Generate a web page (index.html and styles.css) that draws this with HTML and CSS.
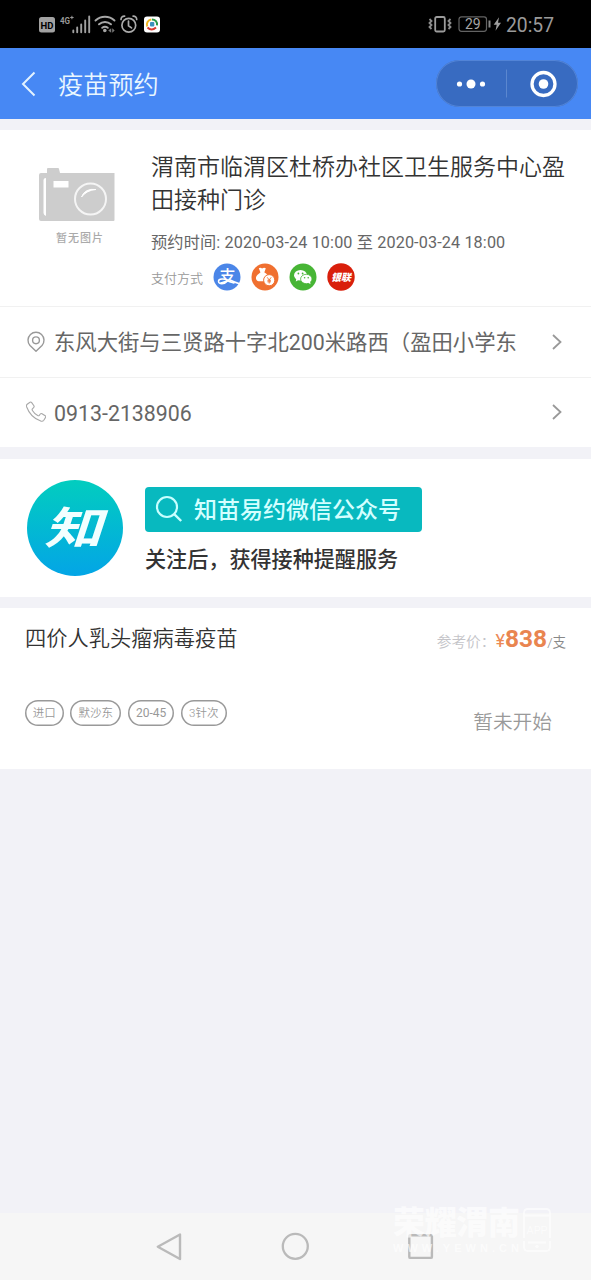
FILE: index.html
```html
<!DOCTYPE html>
<html lang="zh-CN">
<head>
<meta charset="utf-8">
<title>疫苗预约</title>
<link rel="stylesheet" href="styles.css">
</head>
<body>
<div class="status">
  <svg class="status-left" width="126" height="24" viewBox="0 0 126 24">
    <rect x="1" y="5" width="16" height="15.500" rx="2.500" fill="#a2a2a2"/>
    <text x="9" y="16.500" class="hd" text-anchor="middle">HD</text>
    <text x="22" y="11.500" class="net" textLength="10" lengthAdjust="spacingAndGlyphs">4G</text>
    <path d="M32.200 5.500h3.400M33.900 3.800v3.400" stroke="#999" stroke-width="1"/>
    <path d="M35.300 18.500v1.800M39.200 15.500v4.800M43.200 12.500v7.800M47.200 8.500v11.800M51.200 4.500v15.800" stroke="#a0a0a0" stroke-width="1.900" stroke-linecap="round"/>
    <g fill="none" stroke="#a6a6a6" stroke-width="1.900" stroke-linecap="round">
      <path d="M57.500 8.500c5.400-5 13.600-5 19 0M61 12.300c3.500-3.100 8.500-3.100 12 0M64.200 15.800c1.700-1.400 3.900-1.400 5.600 0"/>
    </g>
    <circle cx="66.800" cy="18.500" r="1.800" fill="#a6a6a6"/>
    <path d="M73.200 16.200v4.600l-3-2.300zM74.200 16.200v4.600l2.500-2.300z" fill="#777"/>
    <g fill="none" stroke="#aaa" stroke-width="1.700" stroke-linecap="round">
      <circle cx="90.800" cy="13.200" r="6.900"/><path d="M90.500 9v4.700l3 2.200M83 7.500c0-2 1.700-3.600 3.600-3.400M98.700 7.500c0-2-1.700-3.600-3.600-3.400"/>
    </g>
    <rect x="106" y="4.500" width="16" height="16" rx="3" fill="#fff"/>
    <path d="M109.300 14.500a5 5 0 0 1 4-7" fill="none" stroke="#f2b51e" stroke-width="2"/>
    <path d="M114 7.400a5 5 0 0 1 5 6" fill="none" stroke="#2b9b4b" stroke-width="2"/>
    <path d="M109.500 15.500q4 4 8.500 0" fill="none" stroke="#d93a30" stroke-width="2"/>
    <rect x="112" y="10" width="4.300" height="4.500" rx="1" fill="#3c92bd"/>
  </svg>
  <div class="status-right">
    <svg width="74" height="20" viewBox="0 0 74 20">
      <rect x="7.200" y="3" width="9.600" height="14.500" rx="1.500" fill="none" stroke="#9b9b9b" stroke-width="1.800"/>
      <path d="M1.500 5l2 2-2 2 2 2-2 2 2 2M22.500 5l-2 2 2 2-2 2 2 2-2 2" fill="none" stroke="#8d8d8d" stroke-width="1.800"/>
      <rect x="31" y="2.800" width="27.500" height="14.500" rx="2.500" fill="none" stroke="#636363" stroke-width="1.200"/>
      <path d="M61.500 6.500v7" stroke="#888" stroke-width="2"/>
      <path d="M71 3.300l-5.300 7.500h3l-1.200 6 5.500-8h-3z" fill="#a0a0a0"/>
      <text x="44.800" y="15" class="battery" text-anchor="middle">29</text>
    </svg>
    <span class="clock">20:57</span>
  </div>
</div>

<header class="header">
  <svg class="back" width="16" height="26" viewBox="0 0 16 26"><path d="M13.500 1.500L2 13l11.500 11.500" fill="none" stroke="#e3f3ff" stroke-width="2"/></svg>
  <h1 class="page-title">疫苗预约</h1>
  <div class="capsule">
    <svg width="142" height="47" viewBox="0 0 142 47">
      <g fill="#fff"><circle cx="23.500" cy="24" r="2.600"/><circle cx="35" cy="24" r="4.500"/><circle cx="46.500" cy="24" r="2.600"/><circle cx="107.500" cy="24" r="4.800"/></g>
      <path d="M70.500 9.500v28" stroke="#5b87cf" stroke-width="1"/>
      <circle cx="107.500" cy="24" r="11.500" fill="none" stroke="#fff" stroke-width="3.300"/>
    </svg>
  </div>
</header>

<main>
  <section class="card clinic">
    <div class="clinic-top">
      <div class="photo">
        <svg width="78" height="56" viewBox="0 0 78 56">
          <path d="M1 8q0-2 2-2h6V2q0-1 1-1h10q1 0 1 1l1 4h54.500v47q0 1-1 1H3q-2 0-2-2z" fill="#cdcdcd"/>
          <path d="M5.500 13q0-2 2.500-2v38q-2.500-1-2.500-3zM15.500 14h15v6.500h-15z" fill="#fff"/>
          <circle cx="52.500" cy="32" r="15.500" fill="none" stroke="#f5f5f5" stroke-width="2"/>
          <path d="M43.500 30q3.500-9 14.500-7.500-9 .5-14.500 7.500z" fill="#fff" stroke="#fff" stroke-linejoin="round"/>
        </svg>
        <span class="photo-note">暂无图片</span>
      </div>
      <div class="clinic-info">
        <h2 class="clinic-name">渭南市临渭区杜桥办社区卫生服务中心盈田接种门诊</h2>
        <div class="time">预约时间: 2020-03-24 10:00 至 2020-03-24 18:00</div>
        <div class="pay">
          <span class="pay-label">支付方式</span>
          <svg width="28" height="28" viewBox="0 0 28 28"><circle cx="14" cy="14" r="13.500" fill="#4b86e8"/><text x="14.500" y="18.500" class="alipay" text-anchor="middle">支</text><path d="M16 16.500q5 2.500 10.500 4.300M14.500 18c-3 3.500-9 3.500-9 .3 0-3 6-2.700 9.500-1" fill="none" stroke="#fff" stroke-width="1.500"/></svg>
          <svg width="28" height="28" viewBox="0 0 28 28"><circle cx="14" cy="14" r="13.500" fill="#f07030"/><path d="M7.800 5.200q1.700-.8 3.300.2 1.800-1 3.700-.2l-1.500 4.300H9.500zM9.300 9.500h4.200c3.500 1.800 4.500 5 4.300 8.800H7.500q-3-.8-2.500-4c.5-2 2.300-3.200 4.300-4.800z" fill="#fff"/><circle cx="18.200" cy="17.200" r="5.600" fill="#fff" stroke="#f07030" stroke-width="1"/><path d="M16.200 14.300l2 2.700 2-2.700M18.200 17v3.500M16.400 17.300h3.600M16.400 18.800h3.600" fill="none" stroke="#f07030" stroke-width=".9"/></svg>
          <svg width="28" height="28" viewBox="0 0 28 28"><circle cx="14" cy="14" r="13.500" fill="#47b535"/><ellipse cx="11.500" cy="12.200" rx="6.500" ry="5.300" fill="#fff"/><path d="M7.500 15l-.7 3.500 3.500-2z" fill="#fff"/><ellipse cx="17.300" cy="16" rx="5.700" ry="4.700" fill="#fff" stroke="#47b535" stroke-width=".8"/><path d="M19 19.500l2.500 1.800-.5-3z" fill="#fff"/><g fill="#47b535"><circle cx="9.400" cy="10.500" r=".9"/><circle cx="13.600" cy="10.500" r=".9"/><circle cx="15.600" cy="14.700" r=".8"/><circle cx="19.200" cy="14.700" r=".8"/></g></svg>
          <svg width="28" height="28" viewBox="0 0 28 28"><circle cx="14" cy="14" r="13.700" fill="#d91f0b"/><text x="14" y="17.700" class="union" text-anchor="middle" textLength="20">银联</text></svg>
        </div>
      </div>
    </div>
    <div class="row">
      <svg width="20" height="22" viewBox="0 0 20 22"><path d="M10 20.300L4 14.500a8 8 0 1 1 12 0z" fill="none" stroke="#999" stroke-width="1.400" stroke-linejoin="round"/><circle cx="10" cy="9.300" r="3.400" fill="none" stroke="#999" stroke-width="1.400"/></svg>
      <span class="row-text">东风大街与三贤路十字北200米路西（盈田小学东</span>
      <svg class="arrow" width="12" height="18" viewBox="0 0 12 18"><path d="M1 2l7.500 7L1 16" fill="none" stroke="#999" stroke-width="1.800"/></svg>
    </div>
    <div class="row">
      <svg width="20" height="22" viewBox="0 0 20 22"><path d="M1.200 3.200L4 1.200q1-.5 1.700.4l2.200 3.200q.6 1-.3 1.800L6.400 7.800q-.6.700 0 1.700 2 3.300 5.300 5 1 .5 1.600-.2l1-1.300q.7-.8 1.700-.3l3.200 2q1 .7.400 1.700l-1.800 2.900q-1 1.400-3 .8Q4.500 16.500.7 6q-.6-1.900.5-2.800z" fill="none" stroke="#a8a8a8" stroke-width="1.100"/></svg>
      <span class="row-text">0913-2138906</span>
      <svg class="arrow" width="12" height="18" viewBox="0 0 12 18"><path d="M1 2l7.500 7L1 16" fill="none" stroke="#999" stroke-width="1.800"/></svg>
    </div>
  </section>

  <section class="card banner">
    <div class="logo"><span class="logo-char">知</span></div>
    <div class="banner-body">
      <div class="search">
        <svg width="28" height="28" viewBox="0 0 28 28"><circle cx="12" cy="12" r="10" fill="none" stroke="#c8ffff" stroke-width="2.200"/><path d="M19.200 19.200l7 6.800" stroke="#c8ffff" stroke-width="2.400"/></svg>
        <span class="search-text">知苗易约微信公众号</span>
      </div>
      <div class="banner-note">关注后，获得接种提醒服务</div>
    </div>
  </section>

  <section class="card vaccine">
    <div class="vaccine-top">
      <h3 class="vaccine-name">四价人乳头瘤病毒疫苗</h3>
      <div class="price"><span class="price-label">参考价：</span><span class="yen">¥</span><b>838</b><span class="unit">/支</span></div>
    </div>
    <div class="vaccine-bottom">
      <div class="tags"><span class="tag">进口</span><span class="tag">默沙东</span><span class="tag">20-45</span><span class="tag">3针次</span></div>
      <span class="state">暂未开始</span>
    </div>
  </section>
</main>

<nav class="navbar">
  <svg width="28" height="30" viewBox="0 0 28 30"><path d="M24 2.500v24.500L1.800 14.700z" fill="none" stroke="#bababa" stroke-width="2.400" stroke-linejoin="round"/></svg>
  <svg width="30" height="30" viewBox="0 0 30 30"><circle cx="14.300" cy="14.300" r="12.500" fill="none" stroke="#bababa" stroke-width="2.300"/></svg>
  <svg width="26" height="26" viewBox="0 0 26 26"><rect x="1.300" y="1.300" width="22.600" height="22.600" rx="1" fill="none" stroke="#bababa" stroke-width="2.400"/></svg>
</nav>
<svg class="watermark" width="162" height="70" viewBox="0 -12 162 70">
  <text x="1" y="28" class="wm-name" textLength="127">荣耀渭南</text>
  <text x="1" y="46" class="wm-url" textLength="126">WWW.YEWN.CN</text>
  <path d="M132 32V7q0-4 4-4h18q4 0 4 4v25M132 35v6q0 4 4 4h18q4 0 4-4v-6M132 9.500h26M136 36.500h18" fill="none" stroke="#fff" stroke-width="1.800"/>
  <circle cx="145" cy="40.500" r="1.800" fill="#fff"/>
  <text x="145" y="28" class="wm-app" text-anchor="middle">APP</text>
</svg>
</body>
</html>
```
FILE: styles.css
```css
* { box-sizing: border-box; }
body {
  margin: 0;
  width: 591px;
  height: 1280px;
  position: relative;
  display: flex;
  flex-direction: column;
  overflow: hidden;
  background: #f2f2f7;
  color: #333;
  font-family: Roboto, "Noto Sans CJK SC", sans-serif;
}
svg { display: block; flex: none; }
h1, h2, h3 { margin: 0; font-weight: 350; }
main { flex: 1; display: flex; flex-direction: column; gap: 11.5px; padding-top: 11px; }

.status {
  height: 48px;
  flex: none;
  display: flex;
  justify-content: space-between;
  align-items: center;
  padding: 0 37px 0 38px;
  background: #000;
}
.status-right { display: flex; align-items: center; gap: 4px; }
.clock { padding-top: 3px; font-size: 19.3px; line-height: 24px; color: #9a9a9a; }
.hd { font: 700 9.5px Roboto, sans-serif; fill: #000; }
.net { font: 700 9.5px Roboto, sans-serif; fill: #999; }
.battery { font: 400 14px Roboto, sans-serif; fill: #a5a5a5; }

.header {
  height: 71px;
  flex: none;
  display: flex;
  align-items: center;
  padding: 0 13px 0 21px;
  background: #4788f4;
}
.page-title { margin-left: 21px; padding-top: 5px; font-size: 25.2px; line-height: 36px; color: #eaf7ff; }
.capsule { margin-left: auto; width: 142px; height: 47px; border-radius: 24px; background: #386bc1; box-shadow: inset 0 0 0 1px #5284d7; }

.card { background: #fff; flex: none; }
.clinic { height: 317px; }
.clinic-top { height: 176px; display: flex; padding: 19px 20px 0 38px; }
.photo { width: 78px; padding-top: 18px; display: flex; flex-direction: column; gap: 8px; }
.photo-note { padding-left: 18px; white-space: nowrap; font-size: 11px; letter-spacing: 1px; line-height: 16px; color: #aaa; font-weight: 500; }
.clinic-info { margin-left: 35px; padding-top: 2px; width: 420px; }
.clinic-name { font-size: 23px; line-height: 33px; }
.time { margin-top: 14px; font-size: 16.2px; letter-spacing: .13px; line-height: 24px; color: #666; white-space: nowrap; }
.pay { margin-top: 8px; display: flex; align-items: center; gap: 10px; }
.pay-label { width: 52px; padding-top: 3px; font-size: 13px; line-height: 20px; color: #999; white-space: nowrap; font-weight: 350; }
.alipay { font: 500 16px "Noto Sans CJK SC", sans-serif; fill: #fff; }
.union { font: italic 900 10px "Noto Sans CJK SC", sans-serif; fill: #fff; }
.row { height: 70.5px; display: flex; align-items: center; padding: 0 27px 0 26px; border-top: 1.5px solid #f1f1f1; }
.row-text { margin-left: 8px; padding-top: 3px; font-size: 21.35px; line-height: 30px; color: #666; white-space: nowrap; }
.arrow { margin-left: auto; }

.banner { height: 138px; display: flex; padding: 21px 27px; }
.logo { width: 96px; height: 96px; border-radius: 50%; background: linear-gradient(#02cdbf, #03a5e6); display: flex; align-items: center; justify-content: center; }
.logo-char { font: italic 700 46px/60px "Noto Sans CJK SC", sans-serif; color: #f2ffff; transform: translate(-2px, -3px) scale(1.26, .96); }
.banner-body { margin: 7px 0 0 22px; }
.search { width: 277px; height: 45px; border-radius: 4px; background: #08b9bf; color: #d3ffff; display: flex; align-items: center; gap: 11px; padding-left: 10px; font-size: 23px; line-height: 32px; font-weight: 500; white-space: nowrap; }
.search-text { padding-top: 3px; }
.banner-note { margin-top: 13px; font-size: 21.1px; line-height: 30px; font-weight: 500; white-space: nowrap; }

.vaccine { height: 161px; padding: 15px 25px 0; }
.vaccine-top { height: 32px; display: flex; justify-content: space-between; align-items: center; }
.vaccine-name { font-size: 21.25px; line-height: 30px; }
.price { display: flex; align-items: baseline; padding-top: 2px; line-height: 30px; white-space: nowrap; }
.price-label { font-size: 14.7px; color: #c4c4c8; font-weight: 350; }
.yen { font-size: 18px; color: #ec8a55; }
.price b { font-size: 24.5px; color: #e98550; }
.unit { font-size: 13.5px; color: #888; font-weight: 350; }
.vaccine-bottom { margin-top: 40px; display: flex; justify-content: space-between; align-items: center; padding: 0 14px 0 0; height: 50px; }
.tags { display: flex; gap: 6.5px; margin: -14px 0 0 -.5px; }
.tag { height: 26px; border-radius: 13px; box-shadow: inset 0 0 0 1.5px #999; padding: 0 8.2px; font-size: 11.5px; line-height: 26px; color: #999; white-space: nowrap; font-weight: 350; }
.tag:nth-child(3) { font-size: 12px; font-weight: 400; }
.state { padding-top: 5px; font-size: 19.7px; line-height: 30px; color: #999; font-weight: 350; }

.navbar { height: 67px; flex: none; background: #f6f6f6; display: flex; align-items: center; padding-left: 156px; gap: 97px; }
.watermark { position: absolute; left: 392px; top: 1194px; opacity: .65; }
.wm-name { font: 900 32px "Noto Sans CJK SC", sans-serif; fill: #fff; }
.wm-url { font: 700 11px "Liberation Sans", sans-serif; fill: #fff; }
.wm-app { font: 400 11px Roboto, sans-serif; fill: #fff; }
```
